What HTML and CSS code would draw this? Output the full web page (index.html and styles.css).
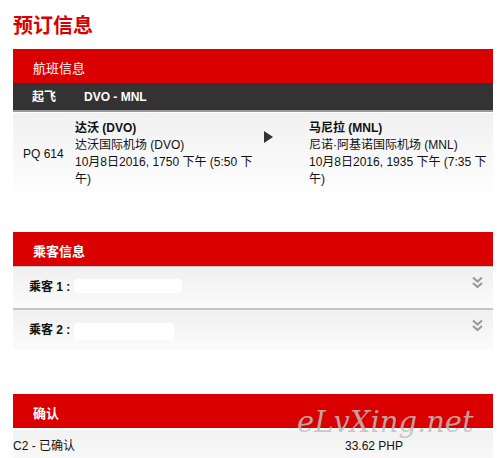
FILE: index.html
```html
<!DOCTYPE html>
<html lang="zh">
<head>
<meta charset="utf-8">
<title>预订信息</title>
<link rel="stylesheet" href="styles.css">
</head>
<body>
<div class="page">
  <h1 class="title">预订信息</h1>

  <section class="section">
    <div class="sec-head sec-head-light">航班信息</div>
    <div class="leg-bar"><span class="leg-label">起飞</span><span class="leg-route">DVO - MNL</span></div>
    <div class="flight">
      <div class="flight-no">PQ 614</div>
      <div class="stop">
        <div class="stop-city">达沃 (DVO)</div>
        <div>达沃国际机场 (DVO)</div>
        <div>10月8日2016, 1750 下午 (5:50 下午)</div>
      </div>
      <div class="arrow"></div>
      <div class="stop stop-arr">
        <div class="stop-city">马尼拉 (MNL)</div>
        <div>尼诺·阿基诺国际机场 (MNL)</div>
        <div>10月8日2016, 1935 下午 (7:35 下午)</div>
      </div>
    </div>
  </section>

  <section class="section section-pax">
    <div class="sec-head">乘客信息</div>
    <div class="pax-row">
      <span class="pax-label">乘客 1 :</span><span class="redact redact-1"></span>
      <svg class="chev" width="11" height="13" viewBox="0 0 11 13"><path d="M1 1.5 L5.5 5.5 L10 1.5 M1 7 L5.5 11 L10 7" fill="none" stroke="#9a9a9a" stroke-width="2.2"/></svg>
    </div>
    <div class="pax-row">
      <span class="pax-label">乘客 2 :</span><span class="redact redact-2"></span>
      <svg class="chev" width="11" height="13" viewBox="0 0 11 13"><path d="M1 1.5 L5.5 5.5 L10 1.5 M1 7 L5.5 11 L10 7" fill="none" stroke="#9a9a9a" stroke-width="2.2"/></svg>
    </div>
  </section>

  <section class="section section-confirm">
    <div class="sec-head">确认</div>
    <div class="confirm-row">
      <span class="confirm-code">C2 - 已确认</span>
      <span class="confirm-amt">33.62 PHP</span>
    </div>
    <div class="watermark">eLvXing.net</div>
  </section>
</div>
</body>
</html>
```

FILE: styles.css
```css
html, body {
  margin: 0;
  padding: 0;
  background: #fff;
}
body {
  font-family: "Liberation Sans", Arial, "Noto Sans CJK SC", sans-serif;
  font-size: 12px;
  color: #111;
}
.page {
  width: 480px;
  margin-left: 13px;
  overflow: hidden;
  height: 458px;
}
.title {
  margin: 0;
  padding-top: 13px;
  height: 49px;
  box-sizing: border-box;
  font-size: 20px;
  line-height: 26px;
  font-weight: bold;
  color: #d80000;
}
.section {
  position: relative;
}
.sec-head {
  background: #da0000;
  color: #fff;
  height: 34px;
  line-height: 39px;
  padding-left: 20px;
  font-size: 13px;
  font-weight: bold;
}
.sec-head-light {
  font-weight: normal;
}
.leg-bar {
  background: #333;
  color: #fff;
  line-height: 29px;
  padding-left: 19px;
  font-weight: bold;
  font-size: 12px;
  border-bottom: 2px solid #999;
  box-sizing: border-box;
  height: 29px;
}
.leg-route {
  margin-left: 28px;
}
.flight {
  display: flex;
  height: 88px;
  margin-top: 1px;
  background: linear-gradient(#f1f1f1, #fff);
  line-height: 17px;
  align-items: flex-start;
  padding-top: 7px;
  box-sizing: border-box;
}
.flight-no {
  width: 62px;
  padding-left: 10px;
  box-sizing: border-box;
  margin-top: 26px;
}
.stop {
  width: 187px;
}
.stop-city {
  font-weight: bold;
}
.arrow {
  width: 0;
  height: 0;
  border-left: 9px solid #333;
  border-top: 6px solid transparent;
  border-bottom: 6px solid transparent;
  margin-top: 11px;
  margin-left: 2px;
  margin-right: 36px;
}
.stop-arr {
  width: 180px;
}
.section-pax {
  margin-top: 31px;
}
.pax-row {
  position: relative;
  display: flex;
  align-items: flex-start;
  height: 42px;
  box-sizing: border-box;
  padding: 12px 0 0 16px;
  background: linear-gradient(#f0f0f0, #fbfbfb);
  border-top: 1px solid #c4c4c4;
  font-weight: bold;
}
.pax-row + .pax-row {
  border-top: 2px solid #c4c4c4;
}
.pax-label {
  line-height: 16px;
}
.redact {
  display: inline-block;
  background: #fff;
  border-radius: 3px;
  margin-left: 4px;
}
.redact-1 {
  width: 108px;
  height: 14px;
}
.redact-2 {
  width: 100px;
  height: 17px;
  margin-top: 1px;
}
.chev {
  position: absolute;
  right: 10px;
  top: 9px;
}
.section-confirm {
  margin-top: 44px;
}
.confirm-row {
  display: flex;
  margin-top: 2px;
  height: 40px;
  background: linear-gradient(#f2f2f2, #fafafa);
  padding-top: 8px;
  box-sizing: border-box;
  line-height: 16px;
}
.confirm-code {
  width: 332px;
}
.watermark {
  position: absolute;
  left: 284px;
  top: 11px;
  line-height: 34px;
  font-family: "DejaVu Serif", "Liberation Serif", serif;
  font-style: italic;
  font-size: 29px;
  color: rgba(190, 190, 190, 0.85);
  pointer-events: none;
}
```
